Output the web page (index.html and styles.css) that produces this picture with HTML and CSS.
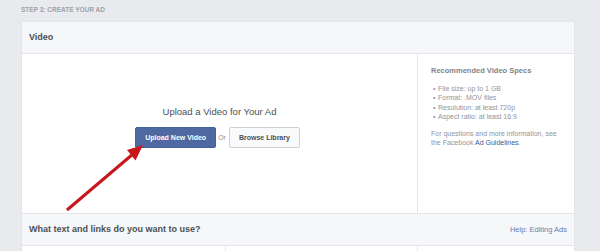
FILE: index.html
```html
<!DOCTYPE html>
<html lang="en">

<head>
  <meta charset="UTF-8" />
  <meta name="viewport" content="width=device-width, initial-scale=1.0" />
  <title>Create Your Ad</title>
  <link rel="stylesheet" href="styles.css">
</head>

<body>
  <div class="page">
    <div class="step">Step 3: Create Your Ad</div>

    <div class="card">
      <div class="card-head">Video</div>
      <div class="card-body">
        <div class="upload">
          <h3>Upload a Video for Your Ad</h3>
          <div class="actions">
            <button class="btn primary">Upload New Video</button>
            <span class="or">Or</span>
            <button class="btn">Browse Library</button>
          </div>
        </div>
        <div class="specs">
          <h4>Recommended Video Specs</h4>
          <ul>
            <li>File size: up to 1 GB</li>
            <li>Format: .MOV files</li>
            <li>Resolution: at least 720p</li>
            <li>Aspect ratio: at least 16:9</li>
          </ul>
          <p>For questions and more information, see the Facebook <a href="#">Ad Guidelines</a>.</p>
        </div>
      </div>

      <div class="card-head split">
        <span>What text and links do you want to use?</span>
        <a href="#" class="help">Help: Editing Ads</a>
      </div>
      <div class="card-row">
        <div></div>
        <div></div>
        <div></div>
      </div>
    </div>
  </div>

  <!-- red pointer arrow drawn over the card -->
  <svg class="arrow" width="600" height="251" viewBox="0 0 600 251">
    <line x1="67" y1="210" x2="133" y2="154" stroke="#c8161d" stroke-width="3" />
    <polygon points="143,145 135.5,160.5 127,150" fill="#c8161d" />
  </svg>
</body>

</html>
```

FILE: styles.css
```css
body {
  margin: 0;
  background-color: #e9eaed;
  font-family: "Liberation Sans", Arial, sans-serif;
}

.page {
  padding: 0 25px 0 21px;
}

.step {
  height: 21px;
  line-height: 19px;
  font-size: 6.5px;
  font-weight: bold;
  color: #9ea2aa;
  text-transform: uppercase;
}

.card {
  background-color: #fff;
  border: 1px solid #e2e4e8;
  border-bottom: none;
}

.card-head {
  height: 31px;
  line-height: 31px;
  padding: 0 7px;
  background-color: #f6f7f9;
  border-bottom: 1px solid #e5e6e9;
  font-size: 9px;
  font-weight: bold;
  color: #4b4f56;
}

.split {
  display: flex;
  justify-content: space-between;
  border-top: 1px solid #e5e6e9;
}

.help {
  font-size: 7.5px;
  font-weight: normal;
  color: #6a7fad;
  text-decoration: none;
}

.card-body {
  display: grid;
  grid-template-columns: 395px 1fr;
  height: 159px;
}

.upload {
  text-align: center;
  padding-top: 52px;
}

.upload h3 {
  margin: 0 0 9px;
  font-size: 9.5px;
  line-height: 12px;
  font-weight: normal;
  color: #4b4f56;
}

.actions {
  display: flex;
  justify-content: center;
  align-items: center;
  gap: 2px;
  margin-left: -4px;
}

.btn {
  height: 21px;
  padding: 0 9px;
  font-family: inherit;
  font-size: 7px;
  font-weight: bold;
  color: #4b4f56;
  background-color: #f9fafb;
  border: 1px solid #ced0d4;
  border-radius: 2px;
}

.primary {
  width: 81px;
  color: #fff;
  background-color: #4e69a2;
  border-color: #46609a;
}

.or {
  font-size: 7px;
  color: #90949c;
  margin-right: 1px;
}

.specs {
  border-left: 1px solid #e5e6e9;
  padding: 12px 14px 0 13px;
  font-size: 7px;
  line-height: 9.5px;
  color: #90949c;
}

.specs h4 {
  margin: 0 0 8px;
  font-size: 7.5px;
  color: #7f838b;
}

.specs ul {
  margin: 0 0 7px;
  padding-left: 6px;
  list-style: none;
}

.specs li::before {
  content: "\2022";
  display: inline-block;
  width: 5px;
  margin-left: -4px;
}

.specs p {
  margin: 0;
}

.specs a {
  color: #365899;
  text-decoration: none;
}

.card-row {
  display: grid;
  grid-template-columns: 203px 192px 1fr;
  height: 5px;
}

.card-row div + div {
  border-left: 1px solid #e5e6e9;
}

.arrow {
  position: absolute;
  top: 0;
  left: 0;
}
```
